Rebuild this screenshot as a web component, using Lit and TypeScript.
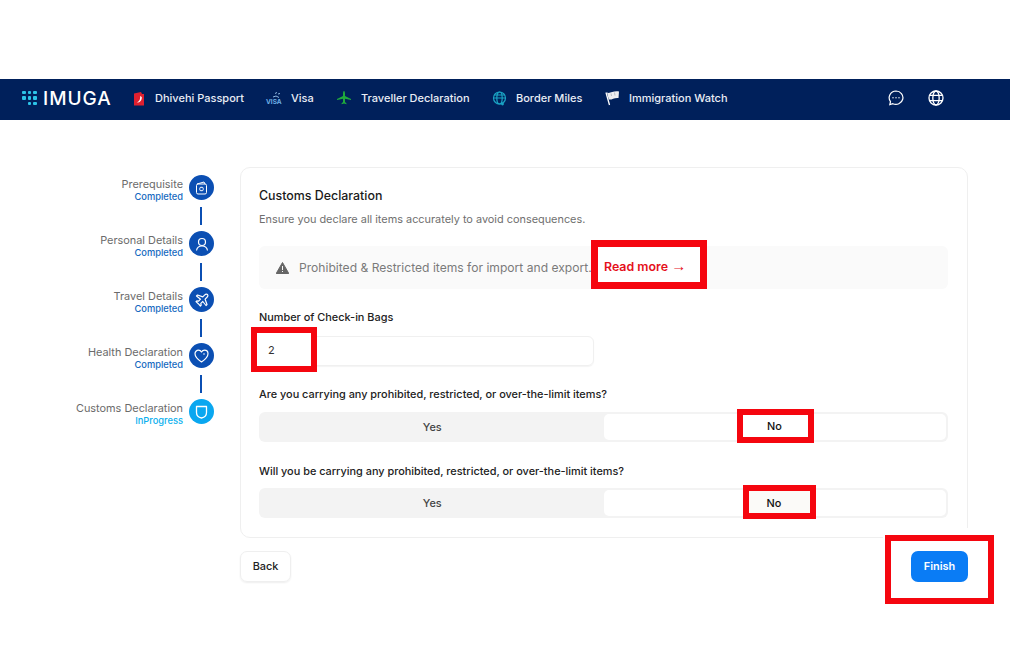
import { LitElement, html, css } from "lit";
import { customElement } from "lit/decorators.js";

const passportIcon = html`<svg width="12" height="15" viewBox="0 0 12 15"><path d="M1 2.500 L8 1 L9 3 L11 3 L11 14.500 L1 14.500 Z" fill="#e0202f"/><path d="M7 5 C7.500 7 7 10 4 11.500 C7 11.500 9 9.500 8.800 6 Z" fill="#fff"/></svg>`;
const visaIcon = html`<svg width="20" height="20" viewBox="0 0 20 20" fill="none"><path d="M9 5.500 L11 4.500 M7 9 L10 8 L13 9.500 M12 6 L14 5.500" stroke="#8fb8e0" stroke-width="1"/></svg>`;
const planeIcon = html`<svg width="14" height="14" viewBox="0 0 14 14"><path d="M7 0 C7.800 0 8 1.500 8 3 L8 5 L14 8 L14 9 L8 7.800 L8 11 L9.500 12.500 L9.500 13.200 L7 12.500 L4.500 13.200 L4.500 12.500 L6 11 L6 7.800 L0 9 L0 8 L6 5 L6 3 C6 1.500 6.200 0 7 0 Z" fill="#1faa3c"/></svg>`;
const tealGlobe = html`<svg width="15" height="15" viewBox="0 0 15 15" fill="none" stroke="#1aa3c4" stroke-width="1.200"><circle cx="7.500" cy="7" r="6"/><ellipse cx="7.500" cy="7" rx="2.700" ry="6"/><path d="M1.500 7 H13.500 M2.500 4 H12.500"/><circle cx="10.500" cy="13" r="1.400" fill="#1aa3c4" stroke="none"/></svg>`;
const flagIcon = html`<svg width="15" height="16" viewBox="0 0 15 16" fill="none"><path d="M4.500 15 L1 2.500" stroke="#fff" stroke-width="1.300"/><path d="M2 2.500 C5 4 8 .5 14 1.500 L13.500 8 C9 7.500 7 10 3.800 9.500 Z" fill="#eeeef0"/><path d="M6 3.500 L6.500 6 M9.500 2.500 L10 5.500" stroke="#b9bdc6" stroke-width="1"/></svg>`;
const chatIcon = html`<svg width="16" height="16" viewBox="0 0 16 16" fill="none" stroke="#fff" stroke-width="1.200"><path d="M8 1 A7 6.700 0 1 1 4.800 13.700 L1.800 14.600 L2.500 11.600 A7 6.700 0 0 1 8 1 Z"/><circle cx="5" cy="7.800" r=".7" fill="#fff" stroke="none"/><circle cx="8" cy="7.800" r=".7" fill="#fff" stroke="none"/><circle cx="11" cy="7.800" r=".7" fill="#fff" stroke="none"/></svg>`;
const globeIcon = html`<svg width="16" height="16" viewBox="0 0 16 16" fill="none" stroke="#fff" stroke-width="1.300"><circle cx="8" cy="8" r="7"/><ellipse cx="8" cy="8" rx="3.200" ry="7"/><path d="M1.700 5.300 H14.300 M1.700 10.700 H14.300"/></svg>`;
const warnIcon = html`<svg width="13" height="12" viewBox="0 0 13 12"><path d="M6.500 .5 L12.800 11.500 L.2 11.500 Z" fill="#666" stroke="#666" stroke-linejoin="round"/><rect x="6" y="4" width="1" height="4" fill="#fafafa"/><rect x="6" y="9" width="1" height="1" fill="#fafafa"/></svg>`;

const stepIcons = [
  html`<svg width="13" height="14" viewBox="0 0 13 14" fill="none" stroke="#fff" stroke-width="1"><rect x="1.500" y="3" width="10" height="10" rx="1.500"/><path d="M2 3 L9 1 L10 3"/><rect x="4.800" y="6.300" width="3.400" height="3.400" rx="1"/></svg>`,
  html`<svg width="14" height="14" viewBox="0 0 14 14" fill="none" stroke="#fff" stroke-width="1.200"><circle cx="7" cy="5" r="3.500"/><path d="M1.500 13.500 C2 10.500 4 9 7 9 C10 9 12 10.500 12.500 13.500"/></svg>`,
  html`<svg width="14" height="14" viewBox="0 0 14 14" fill="none" stroke="#fff" stroke-width="1.200" stroke-linejoin="round"><path d="M12.500 1.500 C11.500 .7 10.500 1.200 9.500 2.200 L7.800 3.900 L2.500 2 L1.500 3 L5.500 6.200 L3.600 8.200 L1.800 7.800 L1 8.600 L3.300 10.700 L5.400 13 L6.200 12.200 L5.800 10.400 L7.800 8.500 L11 12.500 L12 11.500 L10.100 6.200 L11.800 4.500 C12.800 3.500 13.300 2.500 12.500 1.500 Z"/></svg>`,
  html`<svg width="15" height="14" viewBox="0 0 15 14" fill="none" stroke="#fff" stroke-width="1.200" stroke-linejoin="round"><path d="M7.500 13 C3 10 1 7.500 1 4.800 C1 2.700 2.600 1.200 4.500 1.200 C5.700 1.200 6.800 1.800 7.500 3 C8.200 1.800 9.300 1.200 10.500 1.200 C12.400 1.200 14 2.700 14 4.800 C14 7.500 12 10 7.500 13 Z"/><circle cx="10" cy="5" r=".8" fill="#fff" stroke="none"/></svg>`,
  html`<svg width="13" height="14" viewBox="0 0 13 14" fill="none" stroke="#fff" stroke-width="1.300" stroke-linejoin="round"><path d="M1.500 1.500 H11.500 V7.500 C11.500 10.500 9 12.500 6.500 13 C4 12.500 1.500 10.500 1.500 7.500 Z"/></svg>`,
];

@customElement("app-root")
export class AppRoot extends LitElement {
  static styles = css`
    :host { display: block; position: relative; width: 1010px; height: 668px; background: #fff; overflow: hidden; font-family: Inter, "Liberation Sans", sans-serif; padding-top: 79px; box-sizing: border-box; }
    .nav { height: 41px; background: #00205b; display: flex; align-items: center; color: #e9edf5; font-size: 11px; font-weight: 500; padding: 0 0 3px 22px; box-sizing: border-box; }
    .logo { display: flex; align-items: center; width: 111px; gap: 6px; color: #fff; font-size: 19px; font-weight: 500; letter-spacing: 1px; }
    .dots { display: grid; grid-template-columns: repeat(3, 4px); gap: 2px 1.500px; }
    .dots i { width: 3.500px; height: 3.500px; background: #2cc4e8; border-radius: 1px; }
    .dots i.off { background: transparent; }
    .item { display: flex; align-items: center; white-space: nowrap; }
    .nav-actions { display: flex; margin-left: auto; gap: 24px; margin-right: 66px; }
    .nav-actions svg, .item svg { display: block; }
    .visa { position: relative; width: 20px; height: 20px; }
    .visa b { position: absolute; left: 0; bottom: 3px; font-size: 6.500px; line-height: 6px; font-weight: 700; color: #6fb0e6; }
    .main { display: flex; padding-top: 47px; }
    .steps { width: 240px; flex: none; box-sizing: border-box; padding: 8px 26px 0 0; }
    .step { display: flex; justify-content: flex-end; gap: 6px; height: 56px; position: relative; }
    .step-text { text-align: right; padding-top: 2px; }
    .step-label { font-size: 10.900px; line-height: 14px; color: #6b6b6b; }
    .step-status { font-size: 9.300px; line-height: 12px; font-weight: 500; color: #1469c0; }
    .step.active .step-status { color: #0ab0ee; }
    .circle { width: 25px; height: 25px; border-radius: 50%; background: #0b4fb3; display: flex; align-items: center; justify-content: center; flex: none; }
    .step.active .circle { background: #0aa7f0; }
    .line { position: absolute; right: 12px; top: 32px; width: 2px; height: 18px; background: #0b4fb3; }
    .content { width: 728px; flex: none; }
    .card { border: 1px solid #efefef; border-radius: 10px; padding: 20px 19px 19px 18px; height: 371px; box-sizing: border-box; }
    .title { font-size: 12.400px; line-height: 16px; font-weight: 500; color: #1a1a1a; }
    .sub { font-size: 10.900px; line-height: 14px; color: #6f6f6f; margin-top: 8px; }
    .alert { display: flex; align-items: center; gap: 10px; height: 43px; background: #fafafa; border-radius: 6px; margin-top: 20px; padding-left: 17px; font-size: 12.100px; color: #7a7a7a; white-space: nowrap; }
    .field-label { font-size: 10.900px; line-height: 14px; font-weight: 500; color: #222; margin-top: 21px; }
    .input { width: 335px; height: 30px; box-sizing: border-box; border: 1px solid #f0f0f0; border-radius: 6px; margin-top: 12px; box-shadow: 0 1px 1px #f4f4f4; }
    .q { font-size: 10.900px; line-height: 14px; font-weight: 500; color: #222; }
    .q1 { margin-top: 21px; }
    .q2 { margin-top: 22px; }
    .seg { display: flex; height: 30px; background: #f3f3f3; border-radius: 6px; margin-top: 11px; padding: 2px; box-sizing: border-box; font-size: 10.900px; font-weight: 500; }
    .q2 + .seg { margin-top: 10px; }
    .seg div { flex: 1; display: flex; align-items: center; justify-content: center; color: #444; padding-bottom: 1px; }
    .seg .on { background: #fff; border-radius: 5px; padding-bottom: 0; }
    .actions { display: flex; margin-top: 13px; }
    .btn { height: 31px; box-sizing: border-box; border-radius: 7px; font-size: 10.900px; font-weight: 500; display: flex; align-items: center; justify-content: center; padding-bottom: 1px; }
    .back { width: 51px; border: 1px solid #efefef; color: #222; box-shadow: 0 1px 2px #eee; }
    .finish { width: 57px; background: #0a7cf5; color: #fff; font-weight: 600; }
    .mark { position: absolute; box-sizing: border-box; border: 6px solid #f5060f; background: #fff; display: flex; align-items: center; font-size: 11px; color: #333; }
    .readmore { left: 591px; top: 240px; width: 116px; height: 49px; border-width: 7px; padding: 4px 0 0 6px; font-size: 12.400px; font-weight: 600; color: #e5101c; white-space: nowrap; }
    .arrow { font-family: "Liberation Sans", sans-serif; font-size: 15px; line-height: 1; padding-bottom: 3px; }
    .two { left: 251px; top: 327px; width: 66px; height: 45px; padding-left: 11px; }
    .no { justify-content: center; font-size: 10.900px; font-weight: 500; color: #111; }
    .no1 { left: 737px; top: 409px; width: 77px; height: 34px; padding-right: 2px; }
    .no2 { left: 743px; top: 485px; width: 73px; height: 34px; padding: 1px 11px 0 0; background: #fbfaf8; }
    .patch { position: absolute; left: 883px; top: 528px; width: 113px; height: 80px; background: #fff; }
    .finish-mark { left: 885px; top: 535px; width: 109px; height: 69px; background: transparent; }
    .finish-btn { position: absolute; left: 911px; top: 551px; }
  `;

  render() {
    const steps = [
      ["Prerequisite", "Completed"],
      ["Personal Details", "Completed"],
      ["Travel Details", "Completed"],
      ["Health Declaration", "Completed"],
      ["Customs Declaration", "InProgress"],
    ];
    return html`
      <div class="nav">
        <div class="logo">
          <div class="dots">${[1, 1, 1, 1, 1, 1, 0, 1, 1].map((d) => html`<i class=${d ? "" : "off"}></i>`)}</div>
          IMUGA
        </div>
        <div class="item" style="width:134px">${passportIcon}<span style="margin-left:10px">Dhivehi Passport</span></div>
        <div class="item" style="width:71px;margin-left:-1px">
          <div class="visa">${visaIcon}<b>VISA</b></div><span style="margin-left:5px">Visa</span>
        </div>
        <div class="item" style="width:155px">${planeIcon}<span style="margin-left:10px">Traveller Declaration</span></div>
        <div class="item" style="width:113px">${tealGlobe}<span style="margin-left:9px">Border Miles</span></div>
        <div class="item">${flagIcon}<span style="margin-left:9px">Immigration Watch</span></div>
        <div class="nav-actions">${chatIcon}${globeIcon}</div>
      </div>
      <div class="main">
        <div class="steps">
          ${steps.map(([label, status], i) => html`
            <div class="step ${i === 4 ? "active" : ""}">
              <div class="step-text">
                <div class="step-label">${label}</div>
                <div class="step-status">${status}</div>
              </div>
              <div class="circle">${stepIcons[i]}</div>
              ${i < 4 ? html`<div class="line"></div>` : ""}
            </div>`)}
        </div>
        <div class="content">
          <div class="card">
            <div class="title">Customs Declaration</div>
            <div class="sub">Ensure you declare all items accurately to avoid consequences.</div>
            <div class="alert">${warnIcon}<span>Prohibited &amp; Restricted items for import and export.</span></div>
            <div class="field-label">Number of Check-in Bags</div>
            <div class="input"></div>
            <div class="q q1">Are you carrying any prohibited, restricted, or over-the-limit items?</div>
            <div class="seg"><div>Yes</div><div class="on"></div></div>
            <div class="q q2">Will you be carrying any prohibited, restricted, or over-the-limit items?</div>
            <div class="seg"><div>Yes</div><div class="on"></div></div>
          </div>
          <div class="actions"><div class="btn back">Back</div></div>
        </div>
      </div>
      <div class="mark readmore">Read more&nbsp;<span class="arrow">→</span></div>
      <div class="mark two">2</div>
      <div class="mark no no1">No</div>
      <div class="mark no no2">No</div>
      <div class="patch"></div>
      <div class="mark finish-mark"></div>
      <div class="btn finish finish-btn">Finish</div>
    `;
  }
}
